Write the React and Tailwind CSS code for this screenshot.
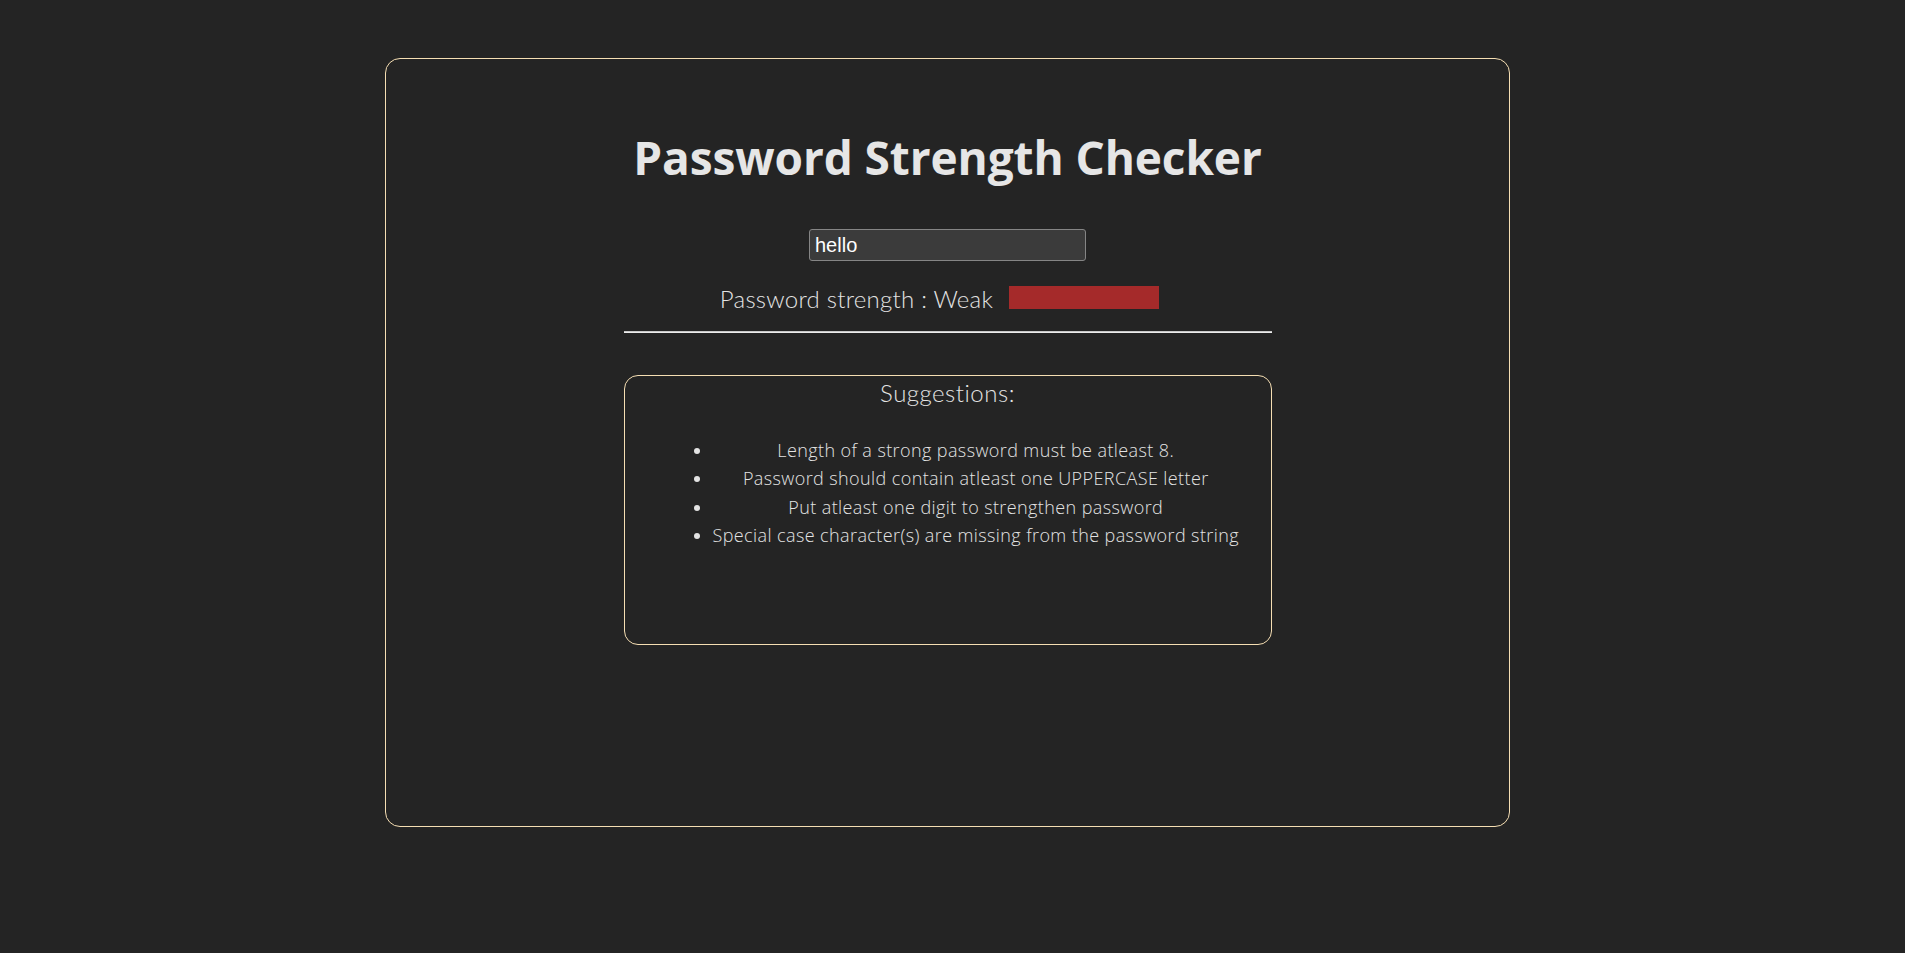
import { useState } from "react";

const suggestions = [
    "Length of a strong password must be atleast 8.",
    "Password should contain atleast one UPPERCASE letter",
    "Put atleast one digit to strengthen password",
    "Special case character(s) are missing from the password string",
];

export default function App() {
    const [password, setPassword] = useState("hello");

    return (
        <div className="min-h-screen bg-[#242424] pt-[58px] font-['Lato',sans-serif] text-[#e3e3e3]">
            <div className="ml-[385px] h-[769px] w-[1125px] rounded-[15px] border border-[#f5deb3] flex flex-col items-center">
                {/* title */}
                <h1 className="mt-[70px] font-['Open_Sans',sans-serif] text-[46px] leading-[56px] font-bold tracking-[-0.1px] text-[#e6e6e6]">
                    Password Strength Checker
                </h1>

                {/* input */}
                <input
                    type="text"
                    value={password}
                    onChange={(e) => setPassword(e.target.value)}
                    className="mt-[44px] h-[32px] w-[277px] rounded-[3px] border border-[#858585] bg-[#3b3b3b] px-[5px] font-['Liberation_Sans',Arial,sans-serif] text-[20px] text-white outline-none"
                />

                {/* strength row */}
                <div className="mt-[23px] flex items-start">
                    <span className="text-[24px] leading-[30px] font-light tracking-[0.25px]">Password strength : Weak</span>
                    <div className="mx-4 mt-[2px] h-[23px] w-[150px] bg-[#a52a2a]"></div>
                </div>

                <hr className="mt-[17px] w-[648px] border-0 border-t border-b border-t-[#c9c9c9] border-b-[#ececec]" />

                {/* suggestions */}
                <div className="mt-[42px] h-[270px] w-[648px] rounded-[14px] border border-[#f5deb3]">
                    <p className="pt-[2px] text-center text-[24px] leading-[30px] font-light tracking-[0.5px]">Suggestions:</p>
                    <ul className="mt-[28px] ml-[88px] w-fit list-disc text-center font-['Open_Sans',sans-serif] text-[18px] leading-[28.33px] font-light tracking-[0.4px]">
                        {suggestions.map((s) => (
                            <li key={s}>{s}</li>
                        ))}
                    </ul>
                </div>
            </div>
        </div>
    );
}
